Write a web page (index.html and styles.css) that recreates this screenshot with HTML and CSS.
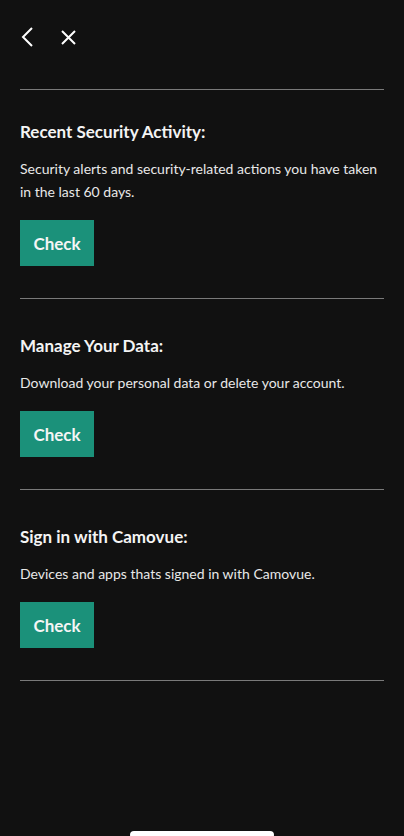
FILE: index.html
```html
<!DOCTYPE html>
<html lang="en">
<head>
<meta charset="utf-8">
<meta name="viewport" content="width=device-width, initial-scale=1">
<title>Security</title>
<link rel="stylesheet" href="styles.css">
</head>
<body>
<main class="page">
  <header class="topbar">
    <button class="icon-btn" aria-label="Back">
      <svg width="24" height="24" viewBox="0 0 24 24"><path d="M16 3 L7 12 L16 21" fill="none" stroke="#fff" stroke-width="2"/></svg>
    </button>
    <button class="icon-btn" aria-label="Close">
      <svg width="24" height="24" viewBox="0 0 24 24"><path d="M6 6 L19 19 M19 6 L6 19" fill="none" stroke="#fff" stroke-width="2"/></svg>
    </button>
  </header>
  <hr class="divider">

  <section class="card first">
    <h2 class="card-title">Recent Security Activity:</h2>
    <p class="card-desc">Security alerts and security-related actions you have taken in the last 60 days.</p>
    <button class="check-btn">Check</button>
  </section>

  <section class="card">
    <h2 class="card-title">Manage Your Data:</h2>
    <p class="card-desc">Download your personal data or delete your account.</p>
    <button class="check-btn">Check</button>
  </section>

  <section class="card">
    <h2 class="card-title">Sign in with Camovue:</h2>
    <p class="card-desc">Devices and apps thats signed in with Camovue.</p>
    <button class="check-btn">Check</button>
  </section>
</main>
<div class="home-indicator"></div>
</body>
</html>
```

FILE: styles.css
```css
html, body {
  margin: 0;
  padding: 0;
  background: #111111;
  height: 100%;
}
body {
  font-family: Lato, "Noto Sans", sans-serif;
  color: #f2f2f2;
  overflow: hidden;
}
.page {
  padding: 0 20px;
}
.topbar {
  display: flex;
  gap: 16px;
  padding-top: 25px;
  margin-left: -4px;
}
.icon-btn {
  background: none;
  border: 0;
  padding: 0;
  width: 24px;
  height: 24px;
  display: block;
  cursor: pointer;
}
.icon-btn svg { display: block; }
.divider {
  margin: 40px 0 0;
  border: 0;
  border-top: 1px solid #7a7a7a;
  height: 0;
}
.card {
  border-bottom: 1px solid #7a7a7a;
  padding: 35px 0 32px;
}
.card.first {
  padding-top: 30px;
}
.card-title {
  margin: 0 0 13px;
  font-size: 17px;
  line-height: 24px;
  font-weight: 700;
  color: #f4f4f4;
}
.card-desc {
  margin: 0 0 17px;
  font-size: 14px;
  line-height: 23px;
  font-weight: 400;
  color: #e8e8e8;
}
.check-btn {
  display: block;
  width: 74px;
  height: 46px;
  border: 0;
  padding: 0;
  background: #1b917a;
  color: #f5f5f5;
  font-family: Lato, "Noto Sans", sans-serif;
  font-size: 17px;
  font-weight: 700;
}
.home-indicator {
  position: fixed;
  left: 130px;
  bottom: -3px;
  width: 144px;
  height: 8px;
  border-radius: 4px;
  background: #ffffff;
}
```
